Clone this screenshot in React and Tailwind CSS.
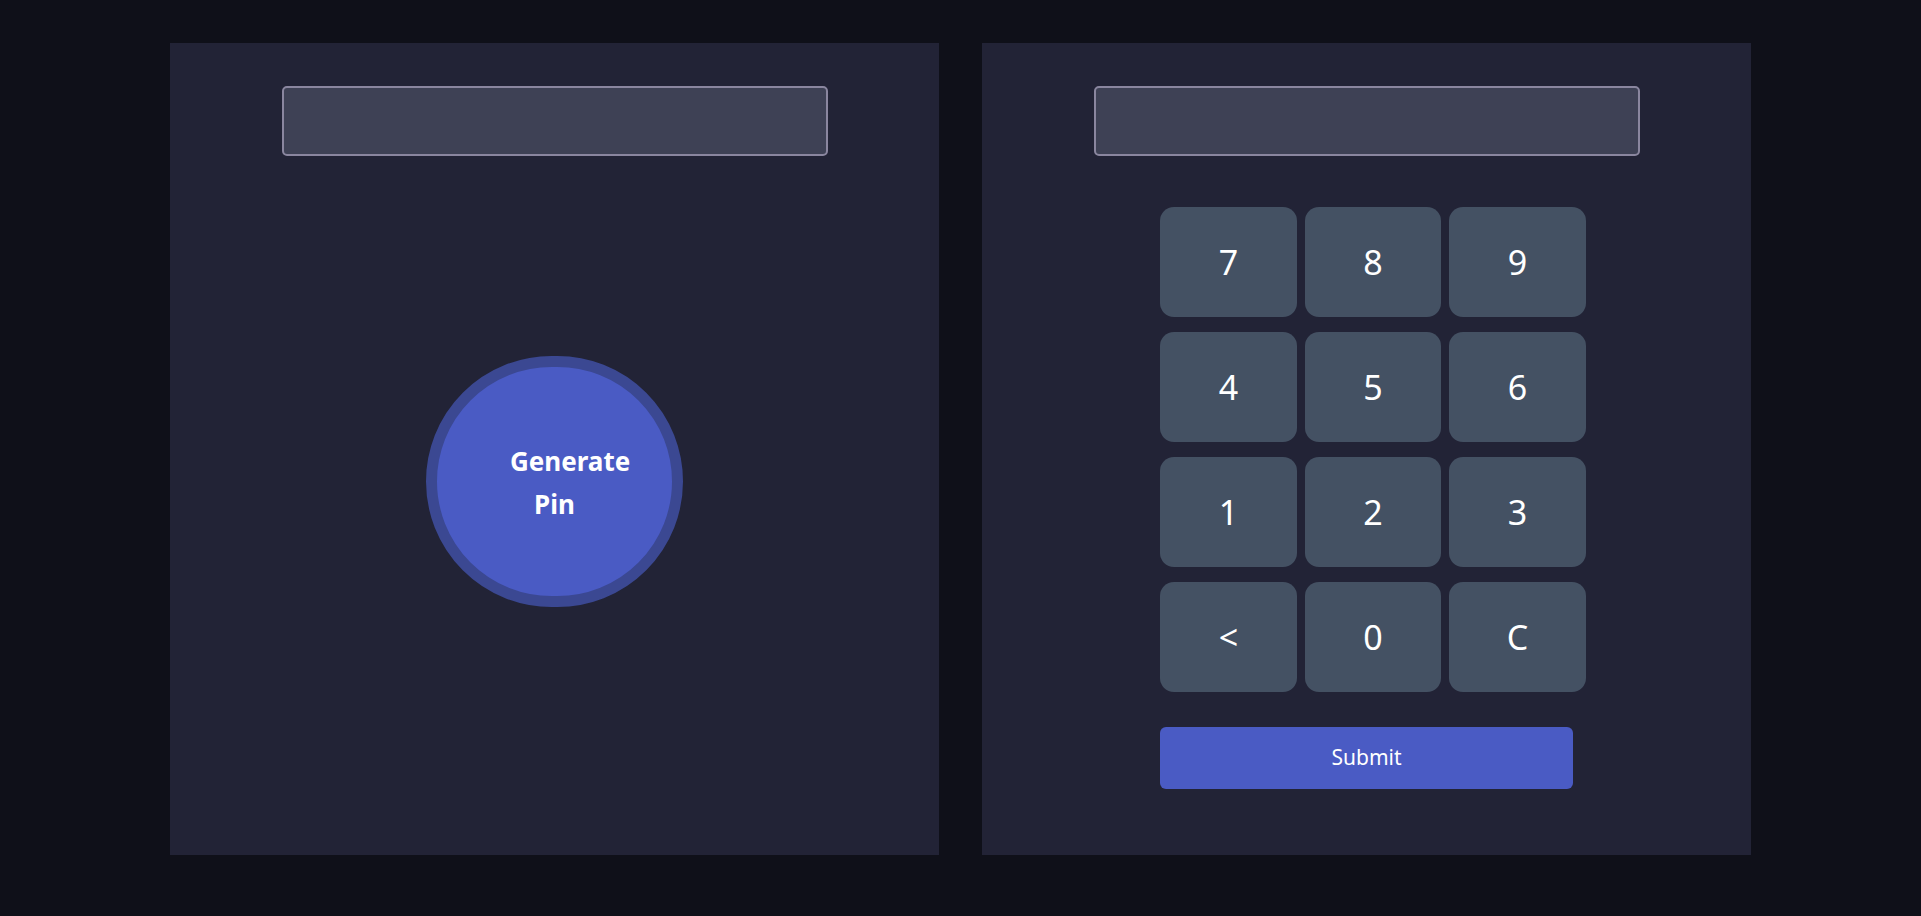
export default function App() {
  const keys = ["7", "8", "9", "4", "5", "6", "1", "2", "3", "<", "0", "C"];
  return (
    <div
      className="w-full h-[916px] bg-[#0f1019] flex justify-center gap-[43px] pt-[43px]"
      style={{ fontFamily: '"Noto Sans", "Open Sans", sans-serif' }}
    >
      <div className="w-[769px] h-[812px] bg-[#222336] flex flex-col items-center pt-[43px]">
        <div className="w-[546px] h-[70px] bg-[#3e4155] border-2 border-[#8a869f] rounded-[5px]" />
        <div className="mt-[200px] w-[257px] h-[251px] rounded-full bg-[#4a5bc4] border-[11px] border-[#3b4892] flex items-center justify-center">
          <div className="w-[89px] text-center text-white font-bold text-[26px] leading-[43px] mt-[3px]">
            Generate Pin
          </div>
        </div>
      </div>
      <div className="w-[769px] h-[812px] bg-[#222336] flex flex-col items-center pt-[43px]">
        <div className="w-[546px] h-[70px] bg-[#3e4155] border-2 border-[#8a869f] rounded-[5px]" />
        <div className="w-[413px] mt-[51px]">
          <div className="grid grid-cols-[137px_136px_137px] gap-x-[8px] gap-y-[15px] w-[426px]">
            {keys.map((k) => (
              <div
                key={k}
                className="h-[110px] bg-[#445163] rounded-[14px] flex items-center justify-center text-white text-[34px]"
              >
                {k}
              </div>
            ))}
          </div>
          <div className="mt-[35px] h-[62px] w-[413px] bg-[#4a5bc4] rounded-md flex items-center justify-center text-white text-[21px]">
            Submit
          </div>
        </div>
      </div>
    </div>
  );
}
